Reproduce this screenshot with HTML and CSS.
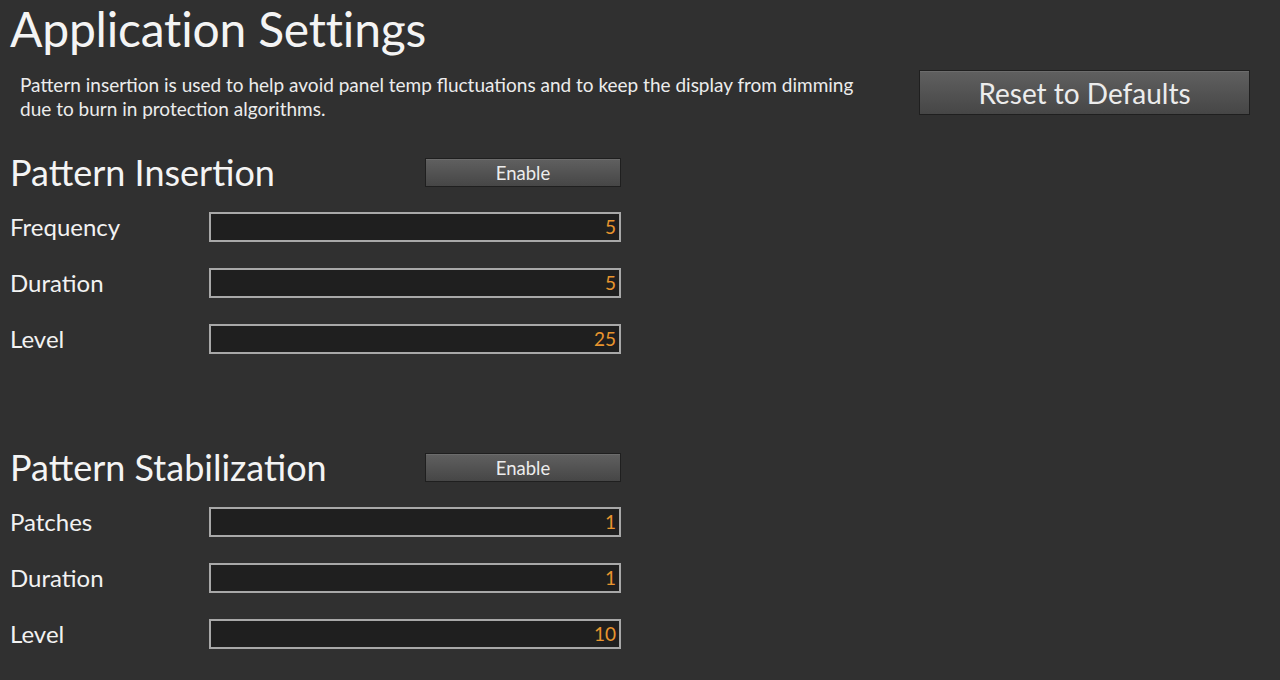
FILE: index.html
```html
<!DOCTYPE html>
<html lang="en">
<head>
<meta charset="utf-8">
<title>Application Settings</title>
<link rel="stylesheet" href="styles.css">
</head>
<body>
<main class="page">
  <h1 class="title">Application Settings</h1>
  <div class="intro">
    <p class="intro-text">Pattern insertion is used to help avoid panel temp fluctuations and to keep the display from dimming due to burn in protection algorithms.</p>
    <button class="btn btn-reset" type="button">Reset to Defaults</button>
  </div>

  <section class="group group-insertion">
    <div class="group-head">
      <h2 class="group-title">Pattern Insertion</h2>
      <button class="btn btn-enable" type="button">Enable</button>
    </div>
    <div class="field"><label class="field-label">Frequency</label><div class="field-input">5</div></div>
    <div class="field"><label class="field-label">Duration</label><div class="field-input">5</div></div>
    <div class="field"><label class="field-label">Level</label><div class="field-input">25</div></div>
  </section>

  <section class="group group-stabilization">
    <div class="group-head">
      <h2 class="group-title">Pattern Stabilization</h2>
      <button class="btn btn-enable" type="button">Enable</button>
    </div>
    <div class="field"><label class="field-label">Patches</label><div class="field-input">1</div></div>
    <div class="field"><label class="field-label">Duration</label><div class="field-input">1</div></div>
    <div class="field"><label class="field-label">Level</label><div class="field-input">10</div></div>
  </section>
</main>
</body>
</html>
```

FILE: styles.css
```css
html, body {
  margin: 0;
  padding: 0;
  background: #303030;
  height: 100%;
}
body {
  font-family: Lato, "Open Sans", "Liberation Sans", sans-serif;
  color: #f2f2f2;
  overflow: hidden;
}
.page {
  padding: 0 10px;
}
.title {
  margin: 0;
  font-weight: 400;
  font-size: 48px;
  line-height: 58px;
  letter-spacing: -0.2px;
  color: #f4f4f4;
}
.intro {
  display: flex;
  justify-content: space-between;
  align-items: flex-start;
  margin-top: 12px;
  padding-left: 10px;
  padding-right: 20px;
}
.intro-text {
  margin: 3px 0 0 0;
  width: 852px;
  font-size: 19px;
  line-height: 24px;
  color: #ececec;
}
.btn {
  font-family: inherit;
  color: #ececec;
  border: 1px solid #1f1f1f;
  background: linear-gradient(#606060, #464646);
  box-shadow: inset 0 1px 0 rgba(255,255,255,0.08);
  padding: 0;
  cursor: pointer;
}
.btn-reset {
  width: 331px;
  height: 45px;
  font-size: 28px;
}
.group-insertion {
  margin-top: 37px;
}
.group-stabilization {
  margin-top: 99px;
}
.group-head {
  display: flex;
  justify-content: space-between;
  align-items: center;
  width: 611px;
  height: 29px;
}
.group-title {
  margin: 0;
  font-weight: 400;
  font-size: 36px;
  line-height: 29px;
  white-space: nowrap;
  color: #f4f4f4;
}
.btn-enable {
  width: 196px;
  height: 29px;
  font-size: 18.5px;
}
.field {
  display: grid;
  grid-template-columns: 199px 412px;
  height: 30px;
  margin-top: 26px;
}
.group-head + .field {
  margin-top: 25px;
}
.field-label {
  font-size: 24px;
  line-height: 30px;
  color: #f2f2f2;
}
.field-input {
  box-sizing: border-box;
  height: 30px;
  border: 2px solid #a8a8a8;
  background: #1f1f1f;
  color: #e8952e;
  font-size: 19px;
  line-height: 26px;
  text-align: right;
  padding-right: 3px;
}
```
